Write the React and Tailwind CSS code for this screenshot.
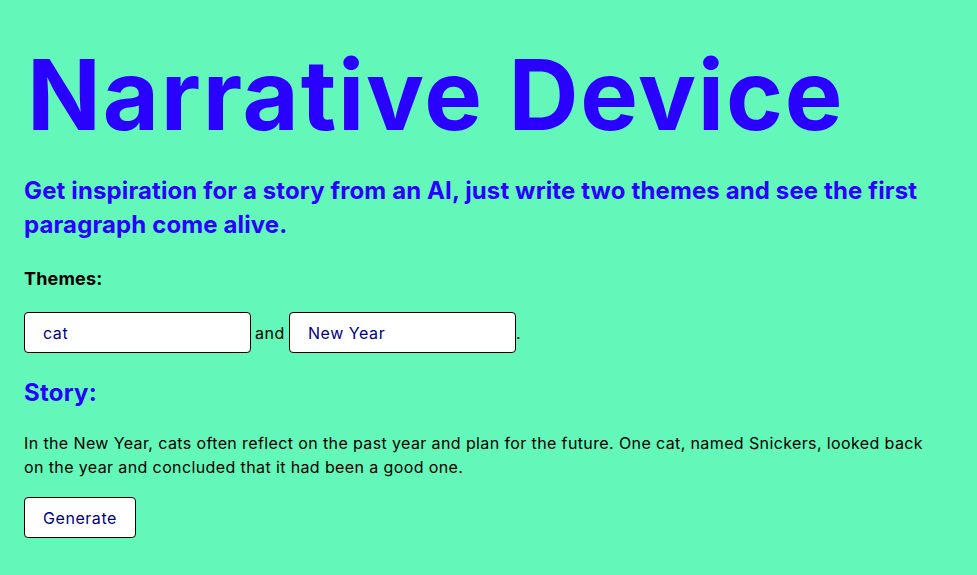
export default function App() {
  return (
    <div className="min-h-[575px] w-full bg-[#63f7b9] px-6 pt-[18px] pb-8 tracking-[0.024em]" style={{ fontFamily: "Inter, 'Noto Sans', sans-serif" }}>
      <h1 className="mt-[5px] pl-[3px] text-[97px] font-bold leading-[144px] text-[#2a00ff] tracking-[0.018em]">Narrative Device</h1>
      <p className="mt-[7px] text-[24px] font-bold leading-[34px] text-[#2a00ff] tracking-[0.005em]">
        Get inspiration for a story from an AI, just write two themes and see the first paragraph come alive.
      </p>
      <p className="mt-[25px] text-[18px] font-bold leading-[24px] text-black tracking-[0.01em]">Themes:</p>
      <div className="mt-[21px] flex items-end text-[16px] text-black">
        <input
          defaultValue="cat"
          className="h-[41px] w-[227px] rounded-[4px] border border-black bg-white px-[18px] text-[16px] text-[#000080] outline-none tracking-[0.035em]"
        />
        <span className="mx-[4px] mb-[10px] leading-[20px] tracking-[0.035em]">and</span>
        <input
          defaultValue="New Year"
          className="h-[41px] w-[227px] rounded-[4px] border border-black bg-white px-[18px] text-[16px] text-[#000080] outline-none tracking-[0.035em]"
        />
        <span className="mb-[10px] leading-[20px]">.</span>
      </div>
      <h2 className="mt-[24px] text-[24px] font-bold leading-[32px] text-[#2a00ff] tracking-[0.01em]">Story:</h2>
      <p className="mt-[22px] max-w-[912px] text-[16px] leading-[24px] text-black">
        In the New Year, cats often reflect on the past year and plan for the future. One cat, named Snickers, looked back on the year and concluded that it had been a good one.
      </p>
      <button className="mt-[18px] h-[41px] rounded-[4px] border border-black bg-white px-[18px] text-[16px] text-[#000080] tracking-[0.035em]">
        Generate
      </button>
    </div>
  );
}
